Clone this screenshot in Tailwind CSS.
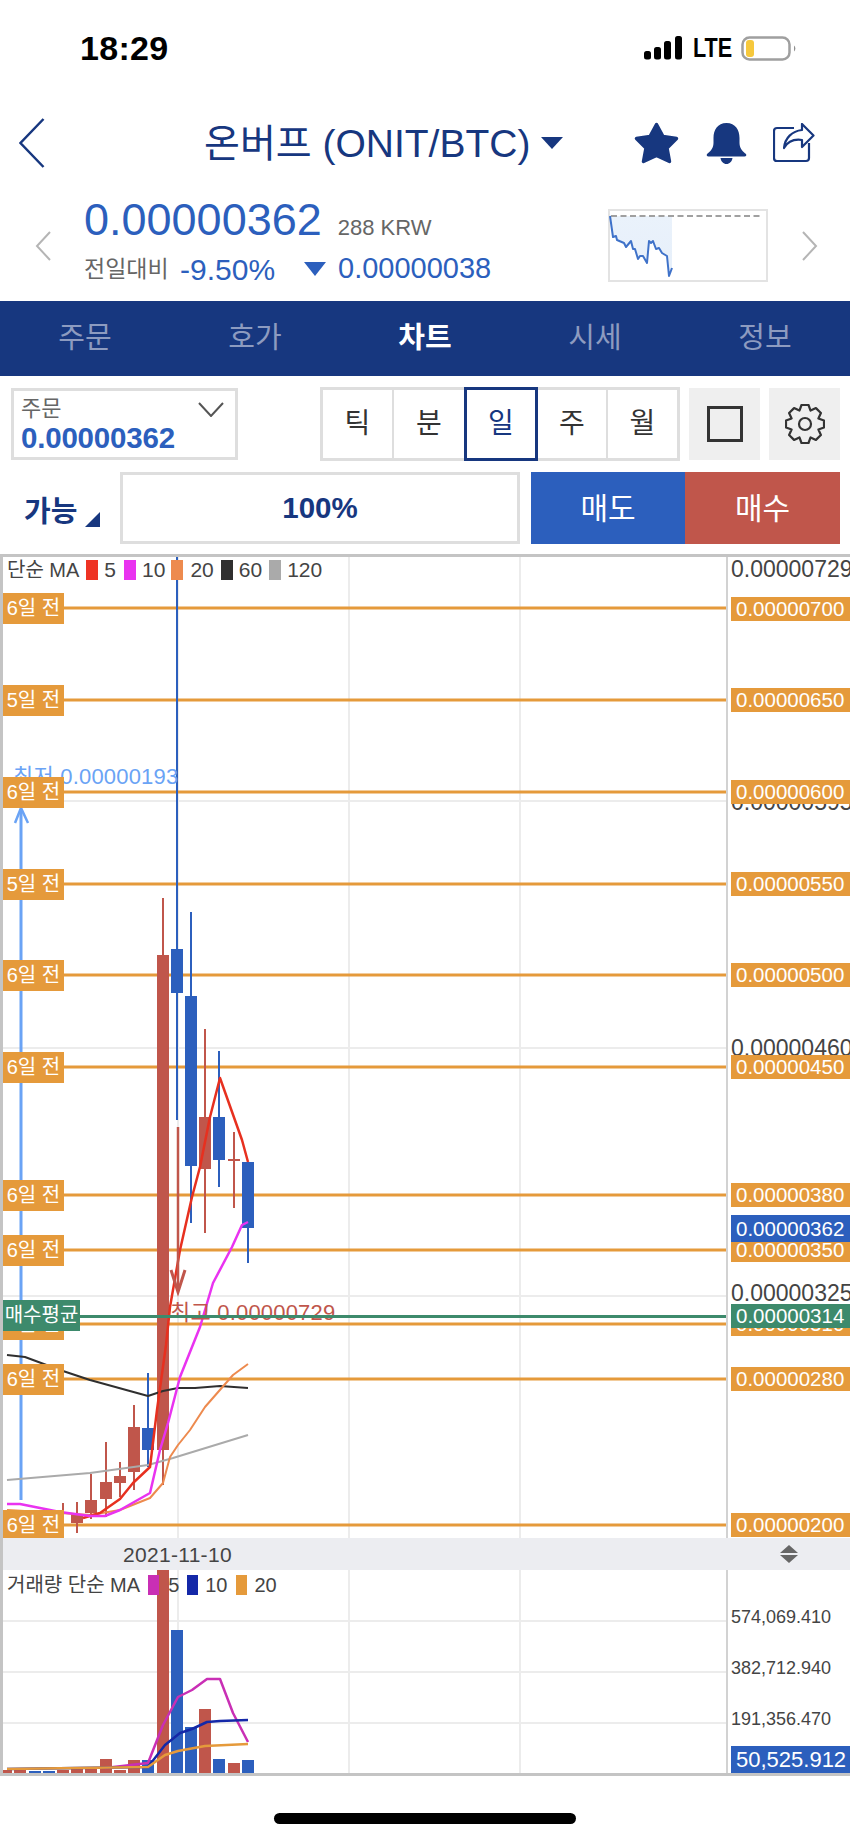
<!DOCTYPE html>
<html lang="ko">
<head>
<meta charset="utf-8">
<script src="https://cdn.jsdelivr.net/npm/@tailwindcss/browser@4"></script>
</head>
<body class="bg-white font-['Liberation_Sans','Noto_Sans_CJK_KR',sans-serif] w-[850px] h-[1841px] overflow-hidden">

<!-- status bar -->
<div class="h-[96px] flex items-center pl-[80px]">
  <span class="text-[34px] tracking-[0.3px] font-bold text-black leading-none">18:29</span>
  <svg width="38" height="24" viewBox="0 0 38 24" class="ml-[476px]"><g fill="#000"><rect x="0" y="15" width="7" height="8.500" rx="2.500"/><rect x="10" y="11" width="7" height="12.500" rx="2.500"/><rect x="20" y="5" width="7" height="18.500" rx="2.500"/><rect x="31" y="0" width="7" height="23.500" rx="2.500"/></g></svg>
  <span class="ml-[11px] w-[38px] text-[27px] font-bold text-black leading-none inline-block origin-left scale-x-[0.8]">LTE</span>
  <svg width="56" height="25" viewBox="0 0 56 25" class="ml-[10px]"><rect x="1.500" y="1.500" width="47" height="22" rx="7" fill="#fff" stroke="#9f9f9f" stroke-width="2.500"/><rect x="5" y="4" width="8" height="17" rx="3" fill="#f6c83c"/><path d="M53 9.500 a4 4 0 0 1 0 6z" fill="#8f8f8f"/></svg>
</div>

<!-- nav -->
<div class="h-[94px] flex items-center pl-[19px] pr-[35px] text-[#17377f]">
  <svg width="26" height="50" viewBox="0 0 26 50" fill="none" stroke="#17377f" stroke-width="2.500"><path d="M24.500 1 L1.500 25 L24.500 49"/></svg>
  <span class="ml-[159px] text-[39px] leading-none whitespace-nowrap">온버프 (ONIT/BTC)</span>
  <svg width="22" height="12" viewBox="0 0 22 12" class="ml-[11px]"><path d="M0 0H22L11 12Z" fill="#17377f"/></svg>
  <div class="ml-auto flex items-center">
    <svg width="45" height="42" viewBox="0 0 45 42"><path d="M22.500 2.500 L29 14.500 L42.500 16.500 L33 26 L35.500 39.500 L22.500 33.500 L9.500 39.500 L12 26 L2.500 16.500 L16 14.500Z" fill="#17377f" stroke="#17377f" stroke-width="3.500" stroke-linejoin="round"/></svg>
    <svg width="41" height="41" viewBox="0 0 41 41" class="ml-[27px]"><path d="M20.500 0 C11.500 0 7.500 7 7.500 15 V20 C7.500 26 3.500 29 1 31 Q0 33 2.500 33.500 H38.500 Q41 33 40 31 C37.500 29 33.500 26 33.500 20 V15 C33.500 7 29.500 0 20.500 0Z M14.500 35 H26.500 C26 38.500 23.500 41 20.500 41 C17.500 41 15 38.500 14.500 35Z" fill="#17377f"/></svg>
    <svg width="42" height="40" viewBox="0 0 42 40" class="ml-[26px]" fill="none" stroke="#17377f" stroke-width="2.200" stroke-linejoin="round"><path d="M21 5 H4 Q1 5 1 8 V35 Q1 38 4 38 H33 Q36 38 36 35 V20"/><path d="M29 1 L40.500 12.500 L29 24 V17 C22 16 15 18 11 25 C12 15 19 8 29 7Z" fill="#fff"/></svg>
  </div>
</div>

<!-- price block -->
<div class="h-[111px] flex items-center">
  <svg width="16" height="30" viewBox="0 0 16 30" class="ml-[35px]" fill="none" stroke="#b5b5b5" stroke-width="2"><path d="M15 1 L2 15 L15 29"/></svg>
  <div class="ml-[33px] w-[520px] self-start mt-[2px] flex flex-col">
    <div class="flex items-baseline h-[56px]">
      <span class="text-[45px] leading-[56px] text-[#2c5fbd]">0.00000362</span>
      <span class="ml-[16px] text-[22px] text-[#666]">288 KRW</span>
    </div>
    <div class="flex items-center h-[42px]">
      <span class="text-[23px] text-[#666] w-[96px]">전일대비</span>
      <span class="text-[30px] text-[#2c5fbd] w-[124px]">-9.50%</span>
      <svg width="22" height="14" viewBox="0 0 22 14"><path d="M0 0H22L11 14Z" fill="#2c5fbd"/></svg>
      <span class="ml-[12px] text-[29px] text-[#2c5fbd]">0.00000038</span>
    </div>
  </div>
  <svg width="160" height="73" viewBox="608 210 160 73" class="ml-[4px]">
    <defs><linearGradient id="spark" x1="0" y1="0" x2="0" y2="1"><stop offset="0" stop-color="#eaf2fb"/><stop offset="1" stop-color="#e6effa"/></linearGradient></defs>
    <rect x="609" y="211" width="158" height="71" fill="#fff" stroke="#e3e3e3" stroke-width="2"/>
    <path d="M610 217H672V269L669 277L667 257L662 254L659 249L656 250L653 242L651 244L649 242L647 264L643 257L640 257L638 260L635 250L633 250L631 242L626 248L624 244L617 241L616 237L613 238Z" fill="url(#spark)"/>
    <path d="M611 217H762" stroke="#a0a0a0" stroke-width="2" stroke-dasharray="6 3.500" fill="none"/>
    <path d="M610 217L613 238L616 237L617 241L624 244L626 248L631 242L633 250L635 250L638 260L640 257L643 257L647 264L649 242L651 244L653 242L656 250L659 249L662 254L667 257L669 277L672 269" fill="none" stroke="#3f72c9" stroke-width="2" stroke-linejoin="round"/>
  </svg>
  <svg width="16" height="30" viewBox="0 0 16 30" class="ml-[34px]" fill="none" stroke="#b5b5b5" stroke-width="2"><path d="M1 1 L14 15 L1 29"/></svg>
</div>

<!-- tabs -->
<div class="h-[75px] bg-[#17377f] grid grid-cols-5 items-center text-center text-[29px] text-[#8d9bc0]">
  <span>주문</span><span>호가</span><span class="font-bold text-white">차트</span><span>시세</span><span>정보</span>
</div>

<!-- controls row 1 -->
<div class="flex pl-[11px] pr-[10px] mt-[12px] h-[73px]">
  <div class="w-[227px] h-[72px] border-[3px] border-[#dedede] relative pl-[7px] pt-[6px] flex flex-col">
    <span class="text-[22px] leading-[24px] text-[#666]">주문</span>
    <span class="text-[29.500px] leading-[33px] font-bold text-[#2c5fbd] tracking-[-0.2px]">0.00000362</span>
    <svg width="26" height="15" viewBox="0 0 26 15" class="absolute right-[11px] top-[11px]" fill="none" stroke="#555" stroke-width="2"><path d="M1 1 L13 14 L25 1"/></svg>
  </div>
  <div class="ml-[82px] w-[360px] h-[74px] flex border-[3px] border-[#dedede] text-[28px] text-[#333] mt-[-1px]">
    <div class="w-[71px] flex items-center justify-center border-r-[2px] border-[#dedede]">틱</div>
    <div class="w-[70px] flex items-center justify-center">분</div>
    <div class="w-[74px] mt-[-3px] mb-[-3px] flex items-center justify-center border-[3px] border-[#17377f] text-[#17377f]">일</div>
    <div class="w-[70px] flex items-center justify-center border-r-[2px] border-[#dedede]">주</div>
    <div class="w-[69px] flex items-center justify-center">월</div>
  </div>
  <div class="ml-[9px] w-[71px] h-[72px] bg-[#efefef] flex items-center justify-center">
    <div class="w-[36px] h-[36px] border-[3px] border-[#333]"></div>
  </div>
  <div class="ml-[9px] w-[71px] h-[72px] bg-[#efefef] flex items-center justify-center">
    <svg width="40" height="40" viewBox="0 0 40 40" fill="none" stroke="#333" stroke-width="2.200" stroke-linejoin="round"><path d="M16.500 1H23.500L25.550 6.600L30.960 4.100L35.900 9.040L33.400 14.450L39 16.500V23.500L33.400 25.550L35.900 30.960L30.960 35.900L25.550 33.400L23.500 39H16.500L14.450 33.400L9.040 35.900L4.100 30.960L6.600 25.550L1 23.500V16.500L6.600 14.450L4.100 9.040L9.040 4.100L14.450 6.600Z"/><circle cx="20" cy="20" r="6"/></svg>
  </div>
</div>

<!-- controls row 2 -->
<div class="flex items-center h-[72px] mt-[11px] pr-[10px]">
  <div class="w-[120px] pl-[24px] flex items-end text-[29px] font-bold text-[#17377f]">
    <span class="leading-[32px] mt-[8px]">가능</span>
    <svg width="15" height="15" viewBox="0 0 15 15" class="ml-[8px] mb-[1px]"><path d="M15 0V15H0Z" fill="#17377f"/></svg>
  </div>
  <div class="w-[400px] h-[72px] border-[3px] border-[#dedede] flex items-center justify-center text-[29.500px] font-bold text-[#17377f]">100%</div>
  <div class="ml-[11px] w-[154px] h-[72px] bg-[#2c5fbd] flex items-center justify-center text-[30px] text-white">매도</div>
  <div class="w-[155px] h-[72px] bg-[#c0564b] flex items-center justify-center text-[30px] text-white">매수</div>
</div>

<!-- chart -->
<div class="relative mt-[10px] w-[850px] h-[1222px] border-t-[3px] border-b-[3px] border-l-[3px] border-[#c4c4c4] box-border overflow-hidden">
  <svg width="850" height="1222" viewBox="3 557 850 1222" class="absolute left-0 top-0">
    <!-- grid -->
    <g stroke="#ececec" stroke-width="2" fill="none">
      <path d="M349 557V1775M520 557V1775M178 557V1775"/>
      <path d="M3 801H726M3 1048H726M3 1296H726M3 1621H726M3 1672H726M3 1723H726"/>
    </g>
    <path d="M727 557V1775" stroke="#d2d2d2" stroke-width="2"/>

    <!-- order lines -->
    <g stroke="#e59a3b" stroke-width="3">
      <path d="M60 608H726M60 700H726M60 792H726M60 884H726M60 975H726M60 1067H726M60 1195H726M60 1250H726M60 1324H726M60 1379H726M60 1525H726"/>
    </g>

    <!-- lowest arrow -->
    <g stroke="#6aa3f5" fill="none">
      <path d="M21 810V1500" stroke-width="3"/>
      <path d="M15 823L21 808L28 823" stroke-width="2.500"/>
    </g>

    <!-- red candles: wicks -->
    <g stroke="#c0564b" stroke-width="2">
      <path d="M163 898V1485M205 1029V1233M234 1132V1208M134 1405V1490M120 1462V1497M106 1442V1517M91 1474V1519M77 1502V1533M63 1503V1525"/>
    </g>
    <g fill="#c0564b">
      <rect x="157" y="955" width="12" height="495"/>
      <rect x="199" y="1117" width="12" height="52"/>
      <rect x="228" y="1159" width="12" height="2"/>
      <rect x="128" y="1427" width="12" height="45"/>
      <rect x="114" y="1476" width="12" height="7"/>
      <rect x="100" y="1482" width="12" height="17"/>
      <rect x="85" y="1500" width="12" height="13"/>
      <rect x="71" y="1514" width="12" height="9"/>
    </g>
    <!-- blue candles -->
    <g stroke="#2c5fbd" stroke-width="2">
      <path d="M177 557V1120M191 912V1223M219 1051V1187M248 1162V1263M148 1373V1467"/>
    </g>
    <g fill="#2c5fbd">
      <rect x="171" y="949" width="12" height="44"/>
      <rect x="185" y="996" width="12" height="170"/>
      <rect x="213" y="1117" width="12" height="43"/>
      <rect x="242" y="1162" width="12" height="66"/>
      <rect x="142" y="1428" width="12" height="22"/>
    </g>

    <!-- MA lines -->
    <g fill="none" stroke-linejoin="round">
      <polyline stroke="#2f2f2f" stroke-width="2" points="7,1355 25,1357 60,1370 90,1380 148,1396 163,1391 178,1388 195,1388 220,1386 248,1388"/>
      <polyline stroke="#aaaaaa" stroke-width="2" points="7,1480 90,1473 148,1465 173,1458 248,1435"/>
      <polyline stroke="#ed8a4e" stroke-width="2" points="7,1510 60,1513 90,1515 120,1510 150,1498 163,1483 170,1457 178,1445 190,1430 205,1407 233,1375 248,1364"/>
      <polyline stroke="#e7301f" stroke-width="2.500" points="83,1518 100,1513 120,1499 133,1483 150,1467 157,1410 166,1345 170,1307 180,1250 192,1197 200,1167 210,1117 220,1078 242,1140 248,1162"/>
      <polyline stroke="#e933f0" stroke-width="2.500" points="7,1504 20,1504 40,1508 60,1512 90,1516 105,1516 120,1510 150,1493 160,1450 168,1423 180,1377 200,1327 213,1283 232,1247 242,1225 248,1222"/>
    </g>

    <!-- highest arrow -->
    <g stroke="#c0564b" fill="none">
      <path d="M178 1127V1290" stroke-width="2.500"/>
      <path d="M171 1270L178 1292L185 1270" stroke-width="3"/>
    </g>

    <!-- volume bars -->
    <g fill="#c0564b">
      <rect x="157" y="1570" width="12" height="203"/>
      <rect x="199" y="1709" width="12" height="64"/>
      <rect x="228" y="1763" width="12" height="10"/>
      <rect x="128" y="1760" width="12" height="13"/>
      <rect x="114" y="1770" width="12" height="3"/>
      <rect x="100" y="1759" width="12" height="14"/>
      <rect x="85" y="1769" width="12" height="4"/>
      <rect x="71" y="1769" width="12" height="4"/>
      <rect x="57" y="1770" width="12" height="3"/>
      <rect x="14" y="1769" width="12" height="4"/>
      <rect x="3" y="1770" width="9" height="3"/>
    </g>
    <g fill="#2c5fbd">
      <rect x="171" y="1630" width="12" height="143"/>
      <rect x="185" y="1727" width="12" height="46"/>
      <rect x="213" y="1759" width="12" height="14"/>
      <rect x="242" y="1760" width="12" height="13"/>
      <rect x="142" y="1760" width="12" height="13"/>
      <rect x="43" y="1771" width="12" height="2"/>
      <rect x="29" y="1771" width="12" height="2"/>
    </g>
    <g fill="none" stroke-width="2.500" stroke-linejoin="round">
      <polyline stroke="#c92fb5" points="105,1768 148,1763 163,1725 178,1697 192,1690 207,1679 220,1679 233,1713 248,1742"/>
      <polyline stroke="#1428a8" points="7,1769 148,1767 165,1745 180,1733 192,1729 207,1722 220,1721 248,1720"/>
      <polyline stroke="#e59a3b" points="7,1769 148,1767 165,1755 178,1751 205,1746 248,1744"/>
    </g>
  </svg>

  <!-- low / high texts -->
  <span class="absolute left-[10px] top-[207px] text-[22px] tracking-[0.2px] leading-[26px] text-[#6aa3f5] whitespace-nowrap">최저 0.00000193</span>
  <span class="absolute left-[167px] top-[743px] text-[22px] tracking-[0.2px] leading-[26px] text-[#c0564b] whitespace-nowrap">최고 0.00000729</span>

  <!-- average line -->
  <div class="absolute left-0 top-[758px] w-[723px] h-[3px] bg-[#3d8a6c]"></div>

  <!-- legend -->
  <div class="absolute left-[4px] top-[1px] h-[24px] flex items-center text-[20px] text-[#444] whitespace-nowrap">
    <span>단순 MA</span>
    <i class="ml-[7px] w-[12px] h-[20px] bg-[#ee3324]"></i><span class="ml-[6px] text-[21px]">5</span>
    <i class="ml-[8px] w-[12px] h-[20px] bg-[#e933f0]"></i><span class="ml-[6px] text-[21px]">10</span>
    <i class="ml-[6px] w-[12px] h-[20px] bg-[#ed8a4e]"></i><span class="ml-[7px] text-[21px]">20</span>
    <i class="ml-[7px] w-[12px] h-[20px] bg-[#2f2f2f]"></i><span class="ml-[6px] text-[21px]">60</span>
    <i class="ml-[7px] w-[12px] h-[20px] bg-[#aaaaaa]"></i><span class="ml-[6px] text-[21px]">120</span>
  </div>

  <!-- left labels -->
  <div class="absolute left-0 top-[36px] w-[61px] h-[31px] bg-[#e59a3b] text-white text-[20px] leading-[31px] text-center">6일 전</div>
  <div class="absolute left-0 top-[128px] w-[61px] h-[31px] bg-[#e59a3b] text-white text-[20px] leading-[31px] text-center">5일 전</div>
  <div class="absolute left-0 top-[220px] w-[61px] h-[31px] bg-[#e59a3b] text-white text-[20px] leading-[31px] text-center">6일 전</div>
  <div class="absolute left-0 top-[312px] w-[61px] h-[31px] bg-[#e59a3b] text-white text-[20px] leading-[31px] text-center">5일 전</div>
  <div class="absolute left-0 top-[403px] w-[61px] h-[31px] bg-[#e59a3b] text-white text-[20px] leading-[31px] text-center">6일 전</div>
  <div class="absolute left-0 top-[495px] w-[61px] h-[31px] bg-[#e59a3b] text-white text-[20px] leading-[31px] text-center">6일 전</div>
  <div class="absolute left-0 top-[623px] w-[61px] h-[31px] bg-[#e59a3b] text-white text-[20px] leading-[31px] text-center">6일 전</div>
  <div class="absolute left-0 top-[678px] w-[61px] h-[31px] bg-[#e59a3b] text-white text-[20px] leading-[31px] text-center">6일 전</div>
  <div class="absolute left-0 top-[752px] w-[61px] h-[31px] bg-[#e59a3b] text-white text-[20px] leading-[31px] text-center">6일 전</div>
  <div class="absolute left-0 top-[807px] w-[61px] h-[31px] bg-[#e59a3b] text-white text-[20px] leading-[31px] text-center">6일 전</div>
  <div class="absolute left-0 top-[953px] w-[61px] h-[31px] bg-[#e59a3b] text-white text-[20px] leading-[31px] text-center">6일 전</div>
  <div class="absolute left-0 top-[743px] w-[77px] h-[31px] bg-[#3d8a6c] text-white text-[20px] leading-[31px] text-center whitespace-nowrap">매수평균</div>

  <!-- axis texts -->
  <span class="absolute left-[728px] top-[-1px] text-[23px] leading-[26px] text-[#444] whitespace-nowrap">0.00000729</span>
  <span class="absolute left-[728px] top-[232px] text-[23px] leading-[26px] text-[#444] whitespace-nowrap">0.00000595</span>
  <span class="absolute left-[728px] top-[478px] text-[23px] leading-[26px] text-[#444] whitespace-nowrap">0.00000460</span>
  <span class="absolute left-[728px] top-[723px] text-[23px] leading-[26px] text-[#444] whitespace-nowrap">0.00000325</span>

  <!-- right labels -->
  <div class="absolute left-[728px] top-[40px] w-[120px] h-[24px] pl-[5px] bg-[#e59a3b] text-white text-[20.500px] leading-[24px]">0.00000700</div>
  <div class="absolute left-[728px] top-[131px] w-[120px] h-[24px] pl-[5px] bg-[#e59a3b] text-white text-[20.500px] leading-[24px]">0.00000650</div>
  <div class="absolute left-[728px] top-[223px] w-[120px] h-[24px] pl-[5px] bg-[#e59a3b] text-white text-[20.500px] leading-[24px]">0.00000600</div>
  <div class="absolute left-[728px] top-[315px] w-[120px] h-[24px] pl-[5px] bg-[#e59a3b] text-white text-[20.500px] leading-[24px]">0.00000550</div>
  <div class="absolute left-[728px] top-[406px] w-[120px] h-[24px] pl-[5px] bg-[#e59a3b] text-white text-[20.500px] leading-[24px]">0.00000500</div>
  <div class="absolute left-[728px] top-[498px] w-[120px] h-[24px] pl-[5px] bg-[#e59a3b] text-white text-[20.500px] leading-[24px]">0.00000450</div>
  <div class="absolute left-[728px] top-[626px] w-[120px] h-[24px] pl-[5px] bg-[#e59a3b] text-white text-[20.500px] leading-[24px]">0.00000380</div>
  <div class="absolute left-[728px] top-[681px] w-[120px] h-[24px] pl-[5px] bg-[#e59a3b] text-white text-[20.500px] leading-[24px]">0.00000350</div>
  <div class="absolute left-[728px] top-[658px] w-[120px] h-[27px] pl-[5px] bg-[#2c5fbd] text-white text-[20.500px] leading-[27px]">0.00000362</div>
  <div class="absolute left-[728px] top-[755px] w-[120px] h-[24px] pl-[5px] bg-[#e59a3b] text-white text-[20.500px] leading-[24px]">0.00000310</div>
  <div class="absolute left-[728px] top-[747px] w-[120px] h-[24px] pl-[5px] bg-[#3d8a6c] text-white text-[20.500px] leading-[24px]">0.00000314</div>
  <div class="absolute left-[728px] top-[810px] w-[120px] h-[24px] pl-[5px] bg-[#e59a3b] text-white text-[20.500px] leading-[24px]">0.00000280</div>
  <div class="absolute left-[728px] top-[956px] w-[120px] h-[24px] pl-[5px] bg-[#e59a3b] text-white text-[20.500px] leading-[24px]">0.00000200</div>

  <!-- date bar -->
  <div class="absolute left-0 top-[981px] w-[847px] h-[32px] bg-[#ecedf1] flex items-center justify-between pl-[120px] pr-[52px]">
    <span class="text-[21px] tracking-[0.3px] text-[#444] leading-none">2021-11-10</span>
    <svg width="18" height="18" viewBox="0 0 18 18"><path d="M9 0L18 8H0Z M0 10H18L9 18Z" fill="#666"/></svg>
  </div>

  <!-- volume legend -->
  <div class="absolute left-[4px] top-[1016px] h-[24px] flex items-center text-[20px] text-[#444] whitespace-nowrap">
    <span>거래량 단순 MA</span>
    <i class="ml-[8px] w-[11px] h-[20px] bg-[#c92fb5]"></i><span class="ml-[9px]">5</span>
    <i class="ml-[8px] w-[11px] h-[20px] bg-[#1428a8]"></i><span class="ml-[7px]">10</span>
    <i class="ml-[8px] w-[11px] h-[20px] bg-[#e59a3b]"></i><span class="ml-[8px]">20</span>
  </div>

  <!-- volume axis -->
  <span class="absolute left-[728px] top-[1047px] text-[18px] leading-[26px] text-[#444] whitespace-nowrap">574,069.410</span>
  <span class="absolute left-[728px] top-[1098px] text-[18px] leading-[26px] text-[#444] whitespace-nowrap">382,712.940</span>
  <span class="absolute left-[728px] top-[1149px] text-[18px] leading-[26px] text-[#444] whitespace-nowrap">191,356.470</span>
  <div class="absolute left-[728px] top-[1189px] w-[120px] h-[27px] pl-[5px] bg-[#2c5fbd] text-white text-[22px] leading-[27px]">50,525.912</div>
</div>

<!-- home indicator -->
<div class="flex justify-center mt-[37px]">
  <div class="w-[302px] h-[11px] rounded-full bg-black"></div>
</div>
</body>
</html>
